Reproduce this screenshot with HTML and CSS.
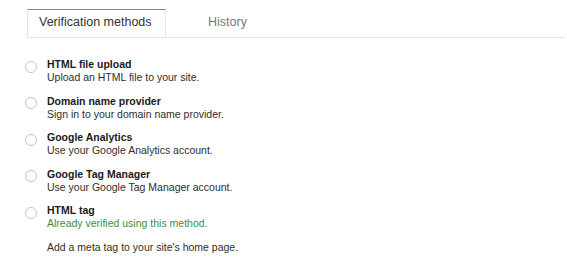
FILE: index.html
```html
<!DOCTYPE html>
<html>
<head>
<meta charset="utf-8">
<link rel="stylesheet" href="styles.css">
</head>
<body>
<div class="tabs">
  <div class="tab active">Verification methods</div>
  <div class="tab">History</div>
</div>
<ul class="methods">
  <li class="method">
    <span class="radio"></span>
    <div class="info">
      <div class="title">HTML file upload</div>
      <div class="desc">Upload an HTML file to your site.</div>
    </div>
  </li>
  <li class="method">
    <span class="radio"></span>
    <div class="info">
      <div class="title">Domain name provider</div>
      <div class="desc">Sign in to your domain name provider.</div>
    </div>
  </li>
  <li class="method">
    <span class="radio"></span>
    <div class="info">
      <div class="title">Google Analytics</div>
      <div class="desc">Use your Google Analytics account.</div>
    </div>
  </li>
  <li class="method">
    <span class="radio"></span>
    <div class="info">
      <div class="title">Google Tag Manager</div>
      <div class="desc">Use your Google Tag Manager account.</div>
    </div>
  </li>
  <li class="method">
    <span class="radio"></span>
    <div class="info">
      <div class="title">HTML tag</div>
      <div class="verified">Already verified using this method.</div>
      <div class="desc extra">Add a meta tag to your site's home page.</div>
    </div>
  </li>
</ul>
</body>
</html>
```
FILE: styles.css
```css
html, body {
  margin: 0;
  padding: 0;
  background: #fff;
  font-family: "Liberation Sans", Arial, sans-serif;
}

.tabs {
  display: flex;
  margin: 10px 2px 0 27px;
  border-bottom: 1px solid #e3e3e3;
  height: 27px;
}

.tab {
  font-size: 12.5px;
  line-height: 25px;
  padding: 0 11px 2px 11px;
  color: #777;
}

.tab.active {
  width: 115px;
  color: #333;
  background: #fff;
  border: 1px solid #e6e6e6;
  border-top: 1px solid #d9635a;
  border-bottom: none;
  height: 25px;
  margin-top: -1px;
  margin-bottom: -1px;
  margin-right: 31px;
}

.methods {
  list-style: none;
  margin: 20px 0 0 25px;
  padding: 0;
}

.method {
  display: flex;
  gap: 10px;
  margin-bottom: 10.5px;
}

.radio {
  flex: none;
  width: 10px;
  height: 10px;
  margin-top: 2.5px;
  border: 1px solid #c4c4c4;
  border-radius: 50%;
  background: #fff;
}

.info {
  font-size: 10.5px;
  line-height: 13px;
}

.title {
  font-weight: bold;
  color: #1a1a1a;
}

.desc {
  color: #2e2e2e;
}

.verified {
  color: #3e8e3e;
}

.extra {
  margin-top: 11px;
}
```
